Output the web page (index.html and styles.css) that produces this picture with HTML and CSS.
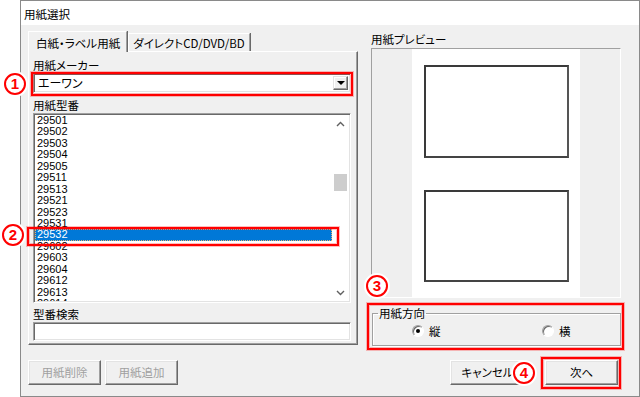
FILE: index.html
```html
<!DOCTYPE html>
<html lang="ja">
<head>
    <meta charset="UTF-8">
    <title>用紙選択</title>
    <link rel="stylesheet" href="styles.css">
</head>
<body>
    <div class="window">
        <div class="titlebar">用紙選択</div>

        <div class="client">
            <div class="main">
                <div class="left">
                    <div class="tabs">
                        <div class="tab active">白紙・ラベル用紙</div>
                        <div class="tab">ダイレクトCD/DVD/BD</div>
                    </div>
                    <div class="tabpanel">
                        <div class="label">用紙メーカー</div>
                        <div class="select">
                            <span class="select-text">エーワン</span>
                            <span class="select-btn"><span class="tri"></span></span>
                        </div>

                        <div class="label gap">用紙型番</div>
                        <div class="listbox">
                            <div class="items">
                                <div class="item">29501</div>
                                <div class="item">29502</div>
                                <div class="item">29503</div>
                                <div class="item">29504</div>
                                <div class="item">29505</div>
                                <div class="item">29511</div>
                                <div class="item">29513</div>
                                <div class="item">29521</div>
                                <div class="item">29523</div>
                                <div class="item">29531</div>
                                <div class="item selected">29532</div>
                                <div class="item">29602</div>
                                <div class="item">29603</div>
                                <div class="item">29604</div>
                                <div class="item">29612</div>
                                <div class="item">29613</div>
                                <div class="item">29614</div>
                            </div>
                            <div class="vscroll">
                                <div class="sbtn">
                                    <svg width="9" height="6" viewBox="0 0 9 6"><path d="M1 5 L4.5 1.5 L8 5" fill="none" stroke="#606060" stroke-width="1.4"/></svg>
                                </div>
                                <div class="track"><div class="thumb"></div></div>
                                <div class="sbtn">
                                    <svg width="9" height="6" viewBox="0 0 9 6"><path d="M1 1 L4.5 4.5 L8 1" fill="none" stroke="#606060" stroke-width="1.4"/></svg>
                                </div>
                            </div>
                        </div>

                        <div class="label gap-sm">型番検索</div>
                        <div class="textbox"></div>
                    </div>
                </div>

                <div class="right">
                    <div class="label preview-label">用紙プレビュー</div>
                    <div class="preview">
                        <div class="paper">
                            <div class="sheet first"></div>
                            <div class="sheet"></div>
                        </div>
                    </div>
                    <fieldset class="group">
                        <legend>用紙方向</legend>
                        <div class="radios">
                            <div class="radio"><span class="dot checked"></span>縦</div>
                            <div class="radio"><span class="dot"></span>横</div>
                        </div>
                    </fieldset>
                </div>
            </div>

            <div class="buttons">
                <div class="btn-group">
                    <div class="btn disabled">用紙削除</div>
                    <div class="btn disabled">用紙追加</div>
                </div>
                <div class="btn-group wide">
                    <div class="btn cancel">キャンセル</div>
                    <div class="btn next">次へ</div>
                </div>
            </div>
        </div>
    </div>

    <!-- annotation marks drawn over the dialog -->
    <div class="mark box1"></div>
    <div class="mark box2"></div>
    <div class="mark box3"></div>
    <div class="mark box4"></div>
    <div class="num num1">1</div>
    <div class="num num2">2</div>
    <div class="num num3">3</div>
    <div class="num num4">4</div>
</body>
</html>
```

FILE: styles.css
```css
body {
    margin: 0;
    width: 640px;
    height: 397px;
    overflow: hidden;
    position: relative;
    background-color: #ffffff;
    font-family: "Noto Sans CJK JP", sans-serif;
    font-size: 11.5px;
    font-feature-settings: "palt";
    color: #000000;
}

.window {
    margin-left: 20px;
    width: 618px;
    height: 395px;
    border: 1px solid #8a8a8a;
    background-color: #f0f0f0;
}

.titlebar {
    height: 24px;
    line-height: 26px;
    padding-left: 3px;
    background-color: #ffffff;
    font-size: 11.5px;
}

.client {
    height: 371px;
    box-sizing: border-box;
    padding: 6px 18px 11px 7px;
    display: flex;
    flex-direction: column;
}

.main {
    display: flex;
    gap: 13px;
}

/* left side: tab control */
.left {
    width: 330px;
}

.tabs {
    display: flex;
    align-items: flex-end;
    height: 20px;
    position: relative;
    z-index: 1;
}

.tab {
    height: 17px;
    line-height: 18px;
    padding: 0 4px 0 4px;
    border-top: 1px solid #ffffff;
    border-left: 1px solid #ffffff;
    border-right: 1px solid #a0a0a0;
    box-shadow: 1px 0 0 #696969;
    margin-right: 1px;
}

.tab.active {
    height: 20px;
    line-height: 22px;
    padding-left: 7px;
    padding-right: 6px;
    margin-bottom: -1px;
    background-color: #f0f0f0;
}

.tabpanel {
    border: 1px solid #ffffff;
    border-right-color: #696969;
    border-bottom-color: #696969;
    box-shadow: inset -1px -1px 0 #a0a0a0;
    padding: 5px 6px 3px 4px;
}

.label {
    height: 16px;
    line-height: 16px;
}

.label.gap {
    margin-top: 4px;
}

.label.gap-sm {
    margin-top: 3px;
}

.select {
    height: 20px;
    box-sizing: border-box;
    background-color: #ffffff;
    border: 1px solid #a0a0a0;
    border-right-color: #ffffff;
    border-bottom-color: #ffffff;
    box-shadow: inset 1px 1px 0 #696969, inset -1px -1px 0 #e3e3e3;
    display: flex;
    align-items: center;
    justify-content: space-between;
    padding: 0 2px 0 4px;
}

.select-text {
    line-height: 18px;
    font-size: 12px;
}

.select-btn {
    width: 15px;
    height: 14px;
    box-sizing: border-box;
    background-color: #f0f0f0;
    border: 1px solid #e3e3e3;
    border-right-color: #696969;
    border-bottom-color: #696969;
    box-shadow: inset -1px -1px 0 #a0a0a0, inset 1px 1px 0 #ffffff;
    display: flex;
    align-items: center;
    justify-content: center;
}

.tri {
    width: 0;
    height: 0;
    border-left: 4px solid transparent;
    border-right: 4px solid transparent;
    border-top: 4px solid #000000;
}

.listbox {
    height: 190px;
    box-sizing: border-box;
    background-color: #ffffff;
    border: 1px solid #a0a0a0;
    border-right-color: #ffffff;
    border-bottom-color: #ffffff;
    box-shadow: inset 1px 1px 0 #696969, inset -1px -1px 0 #e3e3e3;
    padding: 1px;
    display: flex;
    overflow: hidden;
}

.items {
    flex: 1;
    overflow: hidden;
    font-family: "Liberation Sans", sans-serif;
    font-size: 11px;
}

.item {
    height: 11.45px;
    line-height: 11.45px;
    padding-left: 2px;
}

.item.selected {
    background-color: #0078d7;
    color: #ffffff;
    outline: 1px dotted #e8b070;
    outline-offset: -1px;
}

.vscroll {
    width: 17px;
    display: flex;
    flex-direction: column;
}

.sbtn {
    height: 17px;
    display: flex;
    align-items: center;
    justify-content: center;
}

.track {
    flex: 1;
}

.thumb {
    width: 13px;
    height: 17px;
    margin: 42px 0 0 2px;
    background-color: #cdcdcd;
}

.textbox {
    height: 19px;
    box-sizing: border-box;
    background-color: #ffffff;
    border: 1px solid #a0a0a0;
    border-right-color: #ffffff;
    border-bottom-color: #ffffff;
    box-shadow: inset 1px 1px 0 #696969, inset -1px -1px 0 #e3e3e3;
}

/* right side: preview and orientation */
.right {
    width: 250px;
}

.preview-label {
    height: 17px;
    line-height: 17px;
}

.preview {
    height: 250px;
    box-sizing: border-box;
    border: 1px solid #a0a0a0;
    border-right-color: #ffffff;
    border-bottom-color: #ffffff;
    background-color: #efefef;
    display: flex;
    justify-content: center;
}

.paper {
    width: 168px;
    background-color: #ffffff;
    padding-top: 16px;
    box-sizing: border-box;
    display: flex;
    flex-direction: column;
    align-items: center;
}

.sheet {
    width: 145px;
    height: 92px;
    box-sizing: border-box;
    border: 2px solid #3a3a3a;
    border-right-color: #555555;
    border-bottom-color: #444444;
}

.sheet.first {
    height: 93px;
    margin-bottom: 32px;
}

.group {
    margin: 7px 0 0 1px;
    padding: 0 0 4px 0;
    border: 1px solid #a0a0a0;
    box-shadow: inset 1px 1px 0 #ffffff, 1px 1px 0 #ffffff;
}

.group legend {
    margin-left: 5px;
    padding: 0 1px;
    line-height: 16px;
}

.radios {
    display: grid;
    grid-template-columns: 130px auto;
    padding-left: 39px;
    height: 20px;
    align-items: center;
}

.radio {
    display: flex;
    align-items: center;
    gap: 5px;
}

.dot {
    width: 12px;
    height: 12px;
    box-sizing: border-box;
    border-radius: 50%;
    background-color: #ffffff;
    border: 1px solid;
    border-color: #a0a0a0 #ffffff #ffffff #a0a0a0;
    box-shadow: inset 1px 1px 0 #696969;
    display: flex;
    align-items: center;
    justify-content: center;
}

.dot.checked::after {
    content: "";
    width: 4px;
    height: 4px;
    border-radius: 50%;
    background-color: #000000;
}

/* bottom buttons */
.buttons {
    margin-top: auto;
    display: flex;
    justify-content: space-between;
    padding-right: 3px;
}

.btn-group {
    display: flex;
    gap: 4px;
}

.btn-group.wide {
    gap: 20px;
}

.btn {
    width: 73px;
    height: 25px;
    box-sizing: border-box;
    line-height: 22px;
    text-align: center;
    background-color: #f0f0f0;
    border: 1px solid #ffffff;
    border-right-color: #696969;
    border-bottom-color: #696969;
    box-shadow: inset -1px -1px 0 #a0a0a0, inset 1px 1px 0 #e3e3e3;
}

.btn.cancel {
    width: 75px;
}

.btn.disabled {
    color: #a0a0a0;
}

/* red annotation marks */
.mark {
    position: absolute;
    box-sizing: border-box;
    border: 2px solid #ff0000;
    box-shadow: 0 0 0 1px rgba(255, 0, 0, 0.25), inset 0 0 0 1px rgba(255, 0, 0, 0.25);
}

.box1 { left: 31px; top: 72px; width: 322px; height: 24px; }
.box2 { left: 27px; top: 227px; width: 312px; height: 19px; }
.box3 { left: 367px; top: 303px; width: 257px; height: 47px; }
.box4 { left: 541px; top: 357px; width: 80px; height: 32px; }

.num {
    position: absolute;
    width: 22px;
    height: 22px;
    box-sizing: border-box;
    border: 2px solid #ff0000;
    border-radius: 50%;
    background-color: #ffffff;
    box-shadow: 0 0 0 2px #ffffff;
    color: #ff0000;
    font-family: "Liberation Sans", sans-serif;
    font-weight: bold;
    font-size: 15px;
    line-height: 18px;
    text-align: center;
}

.num1 { left: 4px; top: 73px; }
.num2 { left: 2px; top: 224px; }
.num3 { left: 366px; top: 275px; }
.num4 { left: 513px; top: 362px; }
```
